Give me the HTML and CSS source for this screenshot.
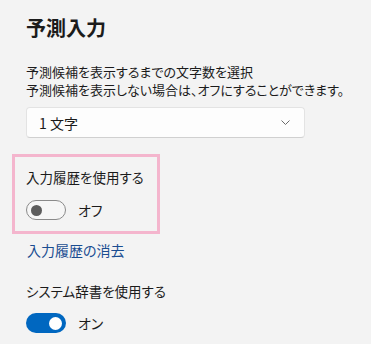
FILE: index.html
```html
<!DOCTYPE html>
<html lang="ja">
<head>
<meta charset="utf-8">
<link rel="stylesheet" href="styles.css">
</head>
<body>
<div class="page">
  <h1 class="title">予測入力</h1>
  <p class="desc">予測候補を表示するまでの文字数を選択<br>予測候補を表示しない場合は、オフにすることができます。</p>
  <div class="select">
    <span class="select-text">1 文字</span>
    <svg class="chevron" width="9" height="5" viewBox="0 0 9 5"><path d="M0.5 0.5 L4.5 4.5 L8.5 0.5" fill="none" stroke="#6a6a6a" stroke-width="1"/></svg>
  </div>
  <div class="highlight">
    <div class="label">入力履歴を使用する</div>
    <div class="toggle-row">
      <span class="toggle off"><span class="knob"></span></span>
      <span class="state">オフ</span>
    </div>
  </div>
  <a class="link">入力履歴の消去</a>
  <div class="label sys">システム辞書を使用する</div>
  <div class="toggle-row on-row">
    <span class="toggle on"><span class="knob"></span></span>
    <span class="state">オン</span>
  </div>
</div>
</body>
</html>
```

FILE: styles.css
```css
html, body {
  margin: 0;
  padding: 0;
  background: #f3f3f3;
}
body {
  font-family: "Noto Sans CJK JP", "Noto Sans", sans-serif;
  color: #1b1b1b;
  font-feature-settings: "palt";
}
.page {
  padding: 15px 0 0 26px;
  display: flex;
  flex-direction: column;
  align-items: flex-start;
}
.title {
  margin: 0;
  font-size: 20px;
  line-height: 26px;
  font-weight: 700;
}
.desc {
  margin: 22px 0 0;
  font-size: 13px;
  line-height: 18px;
}
.select {
  margin-top: 8px;
  box-sizing: border-box;
  width: 279px;
  height: 31px;
  background: #fdfdfd;
  border: 1px solid #e3e3e3;
  border-bottom-color: #d0d0d0;
  border-radius: 4px;
  display: flex;
  align-items: center;
  justify-content: space-between;
  padding: 0 14px 0 12px;
}
.select-text {
  font-size: 14px;
}
.chevron {
  display: block;
}
.highlight {
  margin: 16px 0 0 -14px;
  box-sizing: border-box;
  width: 148px;
  border: 3px solid #f4b5cd;
  padding: 10px 0 11px 11px;
}
.label {
  font-size: 13.5px;
  line-height: 20px;
}
.toggle-row {
  margin-top: 13px;
  display: flex;
  align-items: center;
  gap: 12px;
}
.toggle {
  box-sizing: border-box;
  width: 40px;
  height: 20px;
  border-radius: 10px;
  display: flex;
  align-items: center;
}
.toggle.off {
  border: 1px solid #8a8a8a;
  background: #f6f6f6;
  padding-left: 4px;
}
.toggle.off .knob {
  width: 11px;
  height: 11px;
  border-radius: 50%;
  background: #5c5c5c;
}
.toggle.on {
  background: #0067c0;
  justify-content: flex-end;
  padding-right: 4px;
}
.toggle.on .knob {
  width: 13px;
  height: 13px;
  border-radius: 50%;
  background: #ffffff;
}
.state {
  font-size: 14px;
  line-height: 20px;
}
.link {
  margin-top: 6px;
  font-size: 14px;
  line-height: 20px;
  color: #1a4d91;
  margin-left: 1px;
}
.sys {
  margin-top: 21px;
}
.on-row {
  margin-top: 12px;
}
```
